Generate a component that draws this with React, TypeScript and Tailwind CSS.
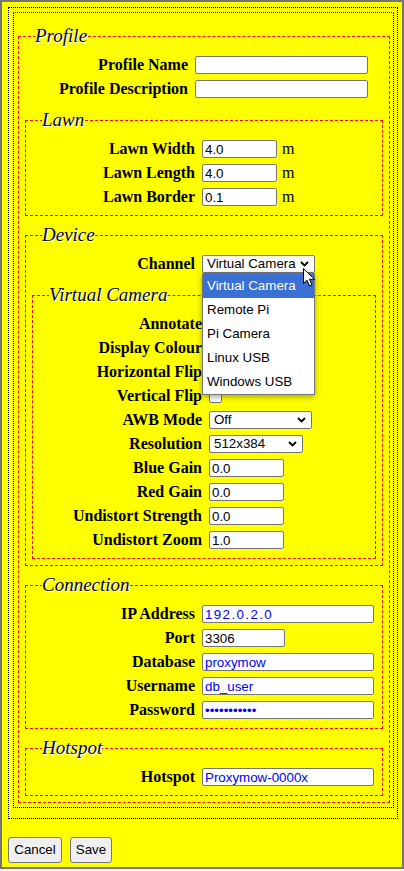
import type { ReactNode } from "react"

const serif = "font-['Liberation_Serif','Times_New_Roman',serif]"
const sans = "font-['Liberation_Sans',Arial,sans-serif]"

function Fieldset({ legend, children }: { legend: string; children: ReactNode }) {
  return (
    <fieldset className="border border-dashed border-[#ff0000] px-[6px] pt-[6px] pb-[6px]">
      <legend className={`ml-[10px] text-[19px] leading-[22px] italic text-[#000033] [text-shadow:1px_1px_0_#ffffff] ${serif}`}>
        {legend}
      </legend>
      {children}
    </fieldset>
  )
}

function Row({ label, children }: { label: string; children?: ReactNode }) {
  return (
    <div className="flex items-center h-6">
      <span className={`w-[163px] shrink-0 text-right font-bold text-[16px] text-black ${serif}`}>{label}</span>
      <div className="ml-[7px] flex items-center">{children}</div>
    </div>
  )
}

function TextInput({ value, w, blue, wide }: { value: string; w: string; blue?: boolean; wide?: boolean }) {
  return (
    <input
      type="text"
      readOnly
      value={value}
      className={`h-[18px] ${w} border border-[#767676] rounded-[2px] bg-white px-[2px] text-[13.33px] leading-[16px] outline-none ${
        blue ? "text-[#0000ff]" : "text-black"
      } ${wide ? "tracking-[1.4px]" : ""} ${sans}`}
    />
  )
}

function Chevron() {
  return (
    <svg width="9" height="6" viewBox="0 0 9 6" className="shrink-0">
      <path d="M1 1 L4.5 4.5 L8 1" fill="none" stroke="#000" strokeWidth="1.8" />
    </svg>
  )
}

function Select({ value, w }: { value: string; w: string }) {
  return (
    <div
      className={`h-[18px] ${w} flex items-center justify-between border border-[#767676] rounded-[2px] bg-white pl-[4px] pr-[5px] text-[13.33px] text-black ${sans}`}
    >
      <span>{value}</span>
      <Chevron />
    </div>
  )
}

function Checkbox() {
  return <div className="w-[13px] h-[13px] border border-[#767676] rounded-[2px] bg-white" />
}

function Cursor() {
  return (
    <svg width="13" height="19" viewBox="0 0 13 19" className="absolute left-[101px] top-[13px] z-20">
      <path
        d="M0.5 0.5 L0.5 15.5 L4 12.2 L6.6 18 L9 17 L6.5 11.3 L11.5 11.3 Z"
        fill="#fff"
        stroke="#000"
        strokeWidth="1"
        strokeLinejoin="round"
      />
    </svg>
  )
}

const channels = ["Virtual Camera", "Remote Pi", "Pi Camera", "Linux USB", "Windows USB"]

function ChannelSelect() {
  return (
    <div className="relative">
      <Select value="Virtual Camera" w="w-[113px]" />
      <ul
        className={`absolute left-0 top-[18px] z-10 w-[113px] border border-[#767676] bg-white shadow-[0_2px_6px_rgba(0,0,0,0.35)] ${sans}`}
      >
        {channels.map((c, i) => (
          <li
            key={c}
            className={`h-6 leading-6 pl-[4px] text-[13.33px] ${i === 0 ? "bg-[#3a70d4] text-white" : "text-black"}`}
          >
            {c}
          </li>
        ))}
      </ul>
      <Cursor />
    </div>
  )
}

export default function App() {
  return (
    <div className="w-[404px] h-[871px] bg-[#f0f0ec]">
      <div className="h-[869px] border-2 border-[#767676] bg-[#ffff00] pl-[6px] pr-[4px] pt-[5px]">
        <div className="border border-dotted border-black pl-[4px] pr-[3px] pt-[4px] pb-[10px]">
          <div className="border border-dotted border-black border-t-[#0000ff] pl-[4px] pr-[3px] pt-[12px] pb-[4px]">
            <fieldset className="border border-dashed border-[#ff0000] px-[6px] pt-[6px] pb-[6px]">
              <legend className={`ml-[10px] text-[19px] leading-[22px] italic text-[#000033] [text-shadow:1px_1px_0_#ffffff] ${serif}`}>
                Profile
              </legend>
              <Row label="Profile Name">
                <TextInput value="" w="w-[173px]" />
              </Row>
              <Row label="Profile Description">
                <TextInput value="" w="w-[173px]" />
              </Row>

              <div className="mt-2">
                <Fieldset legend="Lawn">
                  <Row label="Lawn Width">
                    <TextInput value="4.0" w="w-[75px]" />
                    <span className={`ml-[5px] text-[16px] ${serif}`}>m</span>
                  </Row>
                  <Row label="Lawn Length">
                    <TextInput value="4.0" w="w-[75px]" />
                    <span className={`ml-[5px] text-[16px] ${serif}`}>m</span>
                  </Row>
                  <Row label="Lawn Border">
                    <TextInput value="0.1" w="w-[75px]" />
                    <span className={`ml-[5px] text-[16px] ${serif}`}>m</span>
                  </Row>
                </Fieldset>
              </div>

              <div className="mt-2">
                <Fieldset legend="Device">
                  <Row label="Channel">
                    <ChannelSelect />
                  </Row>
                  <div className="mt-2">
                    <Fieldset legend="Virtual Camera">
                      <Row label="Annotate">
                        <Checkbox />
                      </Row>
                      <Row label="Display Colour">
                        <Checkbox />
                      </Row>
                      <Row label="Horizontal Flip">
                        <Checkbox />
                      </Row>
                      <Row label="Vertical Flip">
                        <Checkbox />
                      </Row>
                      <Row label="AWB Mode">
                        <Select value="Off" w="w-[103px]" />
                      </Row>
                      <Row label="Resolution">
                        <Select value="512x384" w="w-[94px]" />
                      </Row>
                      <Row label="Blue Gain">
                        <TextInput value="0.0" w="w-[75px]" />
                      </Row>
                      <Row label="Red Gain">
                        <TextInput value="0.0" w="w-[75px]" />
                      </Row>
                      <Row label="Undistort Strength">
                        <TextInput value="0.0" w="w-[75px]" />
                      </Row>
                      <Row label="Undistort Zoom">
                        <TextInput value="1.0" w="w-[75px]" />
                      </Row>
                    </Fieldset>
                  </div>
                </Fieldset>
              </div>

              <div className="mt-2">
                <Fieldset legend="Connection">
                  <Row label="IP Address">
                    <TextInput value="192.0.2.0" w="w-[172px]" blue wide />
                  </Row>
                  <Row label="Port">
                    <TextInput value="3306" w="w-[83px]" />
                  </Row>
                  <Row label="Database">
                    <TextInput value="proxymow" w="w-[172px]" blue />
                  </Row>
                  <Row label="Username">
                    <TextInput value="db_user" w="w-[172px]" blue />
                  </Row>
                  <Row label="Password">
                    <TextInput value="•••••••••••" w="w-[172px]" blue />
                  </Row>
                </Fieldset>
              </div>

              <div className="mt-2">
                <Fieldset legend="Hotspot">
                  <Row label="Hotspot">
                    <TextInput value="Proxymow-0000x" w="w-[172px]" blue />
                  </Row>
                </Fieldset>
              </div>
            </fieldset>
          </div>
        </div>

        <div className="mt-[18px] flex gap-2">
          <button
            className={`h-[26px] w-[54px] border border-[#767676] rounded-[3px] bg-[#efefef] text-[13.33px] text-black ${sans}`}
          >
            Cancel
          </button>
          <button
            className={`h-[26px] w-[42px] border border-[#767676] rounded-[3px] bg-[#efefef] text-[13.33px] text-black ${sans}`}
          >
            Save
          </button>
        </div>
      </div>
    </div>
  )
}
